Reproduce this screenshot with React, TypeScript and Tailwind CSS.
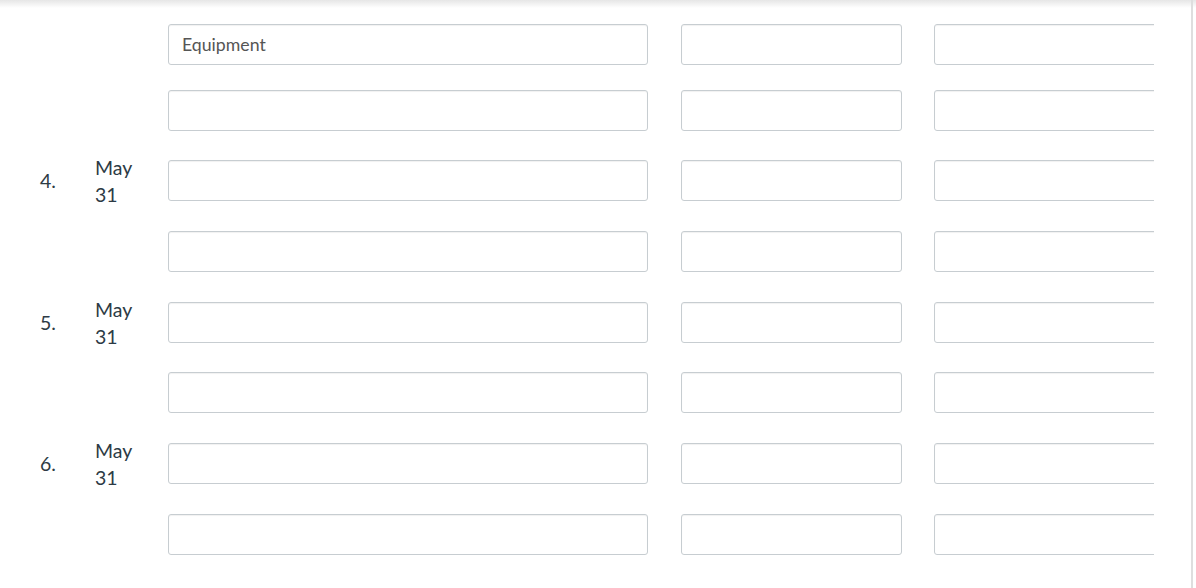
const rows: { num?: string; date?: boolean; value?: string; mt: string }[] = [
  { value: "Equipment", mt: "mt-0" },
  { mt: "mt-[25px]" },
  { num: "4.", date: true, mt: "mt-[29px]" },
  { mt: "mt-[30px]" },
  { num: "5.", date: true, mt: "mt-[30px]" },
  { mt: "mt-[29px]" },
  { num: "6.", date: true, mt: "mt-[30px]" },
  { mt: "mt-[30px]" },
];

const inputCls =
  "h-[41px] rounded-[3px] border border-[#c7cdd1] bg-white px-[13px] text-[17.7px] text-[#555] outline-none shadow-[inset_0_1px_1px_rgba(0,0,0,0.06)]";

export default function App() {
  return (
    <div
      className="relative h-[588px] w-[1196px] overflow-hidden bg-white text-[#2d3b45]"
      style={{ fontFamily: "Lato, 'Open Sans', sans-serif" }}
    >
      <div className="h-[8px] bg-gradient-to-b from-[#e6e6e6] to-white" />
      <div className="absolute right-[3px] top-0 h-full w-[2px] bg-[#dedede]" />
      <div className="pt-[16px]">
        {rows.map((r, i) => (
          <div key={i} className={`flex h-[41px] items-center ${r.mt}`}>
            <div className="flex w-[168px] items-center">
              <span className="ml-[40px] w-[55px] text-[19.5px]">{r.num ?? ""}</span>
              {r.date ? (
                <div className="text-[19.5px] leading-[27px]">
                  <div>May</div>
                  <div>31</div>
                </div>
              ) : null}
            </div>
            <input
              type="text"
              defaultValue={r.value ?? ""}
              className={`${inputCls} w-[480px]`}
            />
            <input type="text" className={`${inputCls} ml-[33px] w-[221px]`} />
            <div className="ml-[32px] w-[220px] overflow-hidden">
              <input type="text" className={`${inputCls} w-[240px]`} />
            </div>
          </div>
        ))}
      </div>
    </div>
  );
}
